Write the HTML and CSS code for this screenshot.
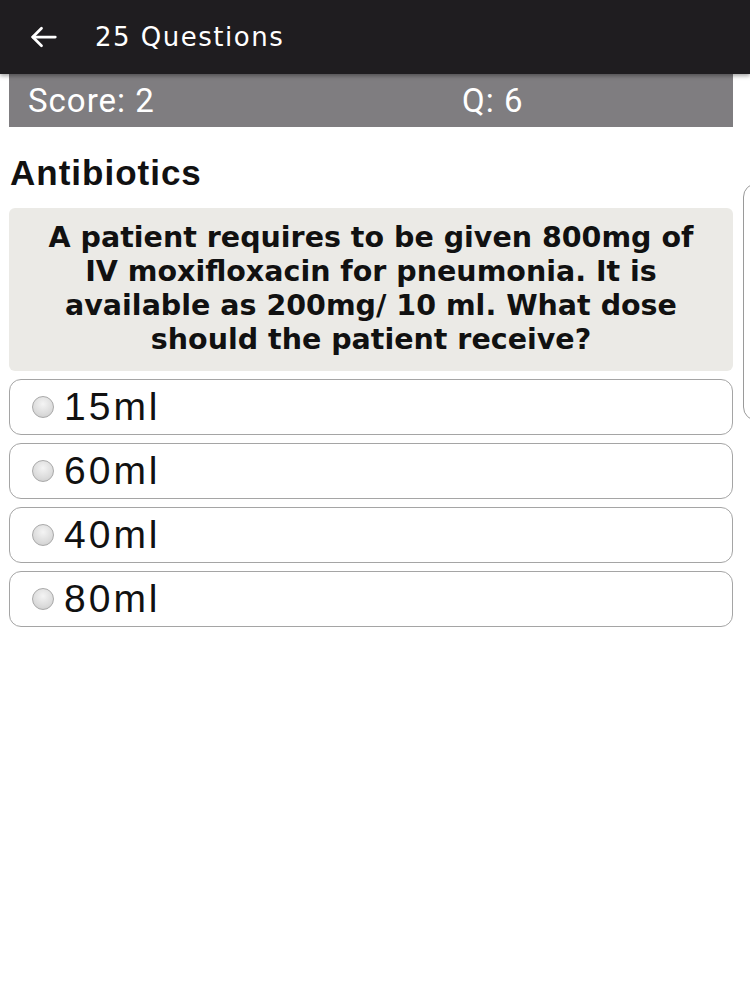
FILE: index.html
```html
<!DOCTYPE html>
<html lang="en">

<head>
    <meta charset="UTF-8">
    <meta name="viewport" content="width=device-width, initial-scale=1.0">
    <title>25 Questions</title>
    <link rel="stylesheet" href="styles.css">
</head>

<body>
    <header class="app-bar">
        <button class="back-button" aria-label="Back">
            <svg xmlns="http://www.w3.org/2000/svg" width="30" height="30" viewBox="0 0 24 24" fill="none" stroke="#ffffff" stroke-width="2.2" stroke-linecap="round" stroke-linejoin="round">
                <line x1="21" y1="12" x2="3" y2="12"></line>
                <polyline points="10 5 3 12 10 19"></polyline>
            </svg>
        </button>
        <h1 class="app-title">25 Questions</h1>
    </header>

    <div class="page">
        <div class="score-bar">
            <span class="score">Score: 2</span>
            <span class="question-no">Q: 6</span>
        </div>

        <h2 class="topic">Antibiotics</h2>

        <div class="question-box">
            A patient requires to be given 800mg of IV moxifloxacin for pneumonia. It is available as 200mg/ 10 ml. What dose should the patient receive?
        </div>

        <form class="options">
            <label class="option">
                <input type="radio" name="answer" value="15">
                <span class="radio-dot"></span>
                <span class="option-text">15ml</span>
            </label>
            <label class="option">
                <input type="radio" name="answer" value="60">
                <span class="radio-dot"></span>
                <span class="option-text">60ml</span>
            </label>
            <label class="option">
                <input type="radio" name="answer" value="40">
                <span class="radio-dot"></span>
                <span class="option-text">40ml</span>
            </label>
            <label class="option">
                <input type="radio" name="answer" value="80">
                <span class="radio-dot"></span>
                <span class="option-text">80ml</span>
            </label>
        </form>
    </div>

    <!-- edge of the next question card peeking in -->
    <div class="next-card"></div>
</body>

</html>
```

FILE: styles.css
```css
/* ---- Base ---- */

html,
body {
    margin: 0;
    padding: 0;
    background-color: #ffffff;
    overflow: hidden;
}

body {
    width: 750px;
    height: 1000px;
    position: relative;
    font-family: "Liberation Sans", Arial, sans-serif;
    color: #111111;
}

/* ---- App bar ---- */

.app-bar {
    height: 74px;
    background-color: #1f1d20;
    display: flex;
    align-items: center;
    box-shadow: 0 2px 4px rgba(0, 0, 0, 0.35);
    position: relative;
    z-index: 1;
}

.back-button {
    background-color: transparent;
    border: none;
    outline: none;
    padding: 0;
    margin-left: 28px;
    width: 32px;
    height: 32px;
    display: flex;
    align-items: center;
    justify-content: center;
    cursor: pointer;
}

.app-title {
    margin: 0 0 0 35px;
    color: #ffffff;
    font-family: "DejaVu Sans", sans-serif;
    font-weight: normal;
    font-size: 26px;
    letter-spacing: 1.5px;
}

/* ---- Page ---- */

.page {
    width: 724px;
    margin-left: 9px;
}

.score-bar {
    height: 53px;
    background-color: #7f7d80;
    display: flex;
    align-items: center;
    color: #ffffff;
    font-family: Roboto, sans-serif;
    font-size: 33px;
    letter-spacing: 1px;
}

.score {
    margin-left: 19px;
    width: 434px;
}

.topic {
    margin: 24px 0 0 1px;
    font-family: "Liberation Sans", Arial, sans-serif;
    font-weight: bold;
    font-size: 35px;
    letter-spacing: 1px;
    line-height: 44px;
    height: 46px;
}

.question-box {
    margin-top: 11px;
    background-color: #ebeae6;
    border-radius: 6px;
    padding: 13px 26px 14px;
    text-align: center;
    font-family: "DejaVu Sans", sans-serif;
    font-weight: bold;
    font-size: 28.5px;
    line-height: 34px;
}

/* ---- Options ---- */

.options {
    margin: 8px 0 0;
    display: flex;
    flex-direction: column;
    gap: 8px;
}

.option {
    box-sizing: border-box;
    height: 56px;
    border: 1.5px solid #a5a5a5;
    border-radius: 12px;
    display: flex;
    align-items: center;
    cursor: pointer;
}

.option input {
    display: none;
}

.radio-dot {
    width: 22px;
    height: 22px;
    margin-left: 22px;
    border-radius: 50%;
    border: 1.5px solid #a9a9a9;
    background: radial-gradient(circle at 50% 35%, #f4f4f4 0%, #dcdcdc 60%, #c8c8c8 100%);
    box-sizing: border-box;
}

.option-text {
    margin-left: 10px;
    font-family: "Liberation Sans", Arial, sans-serif;
    font-size: 39px;
    letter-spacing: 3px;
    color: #111111;
}

.option input:checked + .radio-dot {
    background: radial-gradient(circle, #3b8de0 40%, #dcdcdc 45%);
}

/* ---- Next card peeking at the right edge ---- */

.next-card {
    position: absolute;
    left: 743px;
    top: 183px;
    width: 40px;
    height: 236px;
    border: 1.5px solid #9a9a9a;
    border-radius: 14px;
}
```
